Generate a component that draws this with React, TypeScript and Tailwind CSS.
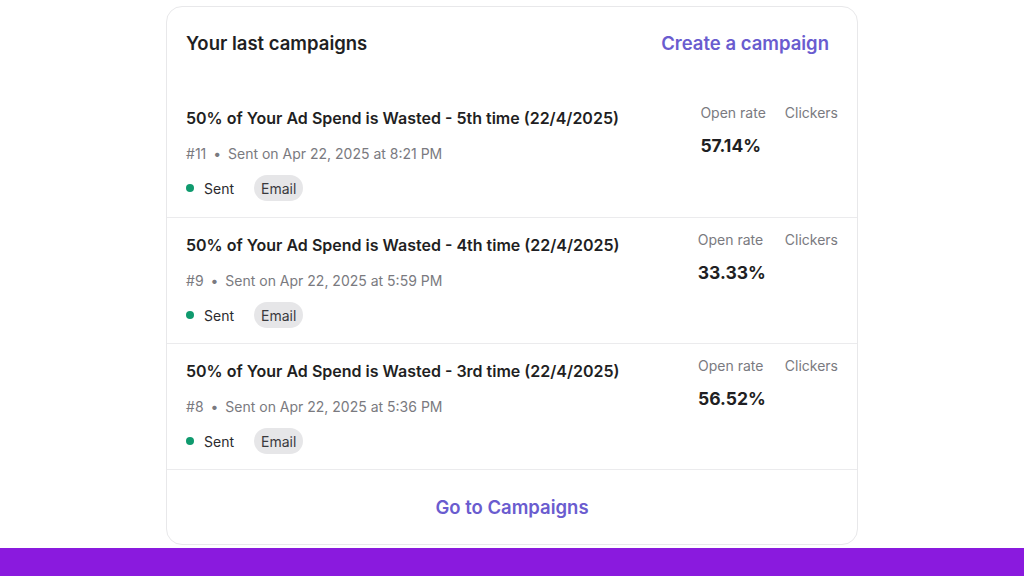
const campaigns = [
  { id: 11, title: "50% of Your Ad Spend is Wasted - 5th time (22/4/2025)", sent: "Apr 22, 2025 at 8:21 PM", rate: "57.14%" },
  { id: 9, title: "50% of Your Ad Spend is Wasted - 4th time (22/4/2025)", sent: "Apr 22, 2025 at 5:59 PM", rate: "33.33%" },
  { id: 8, title: "50% of Your Ad Spend is Wasted - 3rd time (22/4/2025)", sent: "Apr 22, 2025 at 5:36 PM", rate: "56.52%" },
];

export default function App() {
  return (
    <div className="h-[576px] flex flex-col bg-white font-['Inter',sans-serif] text-[#1f1f23]">
      <div className="mx-auto mt-[6px] w-[692px] h-[539px] rounded-2xl border border-[#e8e8ea] bg-white flex flex-col overflow-hidden">
        <div className="h-[84px] flex justify-between items-start pl-[19px] pr-[28px] pt-[24px]">
          <h2 className="text-[18.5px] leading-6 font-semibold">Your last campaigns</h2>
          <a className="text-[18.5px] leading-6 font-semibold text-[#6a5ccf]">Create a campaign</a>
        </div>

        {campaigns.map((c, i) => (
          <div
            key={c.id}
            className={`h-[126px] flex justify-between pl-[19px] pr-[19px] ${i > 0 ? "border-t border-[#ebebed]" : ""}`}
          >
            <div className="pt-[15px] flex flex-col">
              <p className="text-[16px] leading-6 font-semibold">{c.title}</p>
              <p className="mt-[14px] text-[14px] leading-5 text-[#7a7a80]">
                #{c.id} <span className="mx-[3px]">•</span> Sent on {c.sent}
              </p>
              <div className="mt-[11px] flex items-center h-[26px]">
                <span className="w-2 h-2 rounded-full bg-[#0f9a6e]" />
                <span className="ml-[10px] text-[14px] text-[#2a2a2e]">Sent</span>
                <span className="ml-5 h-[26px] px-[7px] flex items-center rounded-full bg-[#e6e6e8] text-[14px] text-[#3a3a3e]">
                  Email
                </span>
              </div>
            </div>
            <div className="pt-3 flex items-start gap-[19px]">
              <div className="flex flex-col items-start">
                <span className="text-[14px] leading-5 text-[#7a7a80]">Open rate</span>
                <span className="mt-[11px] text-[17.5px] leading-6 font-bold">{c.rate}</span>
              </div>
              <span className="text-[14px] leading-5 text-[#7a7a80]">Clickers</span>
            </div>
          </div>
        ))}

        <div className="flex-1 border-t border-[#ebebed] flex items-center justify-center">
          <a className="text-[18.5px] leading-6 font-semibold text-[#6a5ccf]">Go to Campaigns</a>
        </div>
      </div>
      <div className="mt-auto h-[28px] bg-[#8a1ade]" />
    </div>
  );
}
